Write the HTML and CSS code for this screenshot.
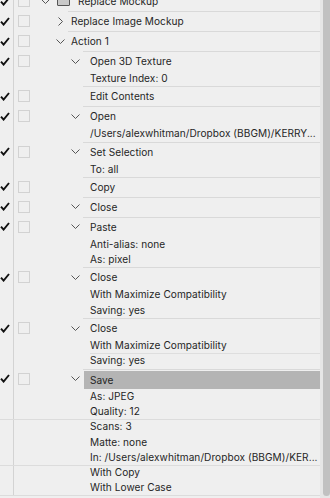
FILE: index.html
```html
<!doctype html>
<html lang="en">
<head>
<meta charset="utf-8">
<title>Actions</title>
<link rel="stylesheet" href="styles.css">
</head>
<body>

<div class="panel">
  <div class="list">

    <div class="row lv0">
      <div class="chk"><span><svg viewBox="0 0 10 9"><path d="M1 4.6l2.6 3L9 1"/></svg></span></div>
      <div class="box"><i></i></div>
      <div class="main">
        <span class="tw"><svg class="dn" viewBox="0 0 9 5"><path d="M.5.5l4 4 4-4"/></svg></span>
        <span class="set"></span>
        <div class="lines"><div class="ln">Replace Mockup</div></div>
      </div>
    </div>

    <div class="row lv1">
      <div class="chk"><span><svg viewBox="0 0 10 9"><path d="M1 4.6l2.6 3L9 1"/></svg></span></div>
      <div class="box"><i></i></div>
      <div class="main">
        <span class="tw"><svg class="rt" viewBox="0 0 5 9"><path d="M.5.5l4 4-4 4"/></svg></span>
        <div class="lines"><div class="ln">Replace Image Mockup</div></div>
      </div>
    </div>

    <div class="row lv1">
      <div class="chk"><span><svg viewBox="0 0 10 9"><path d="M1 4.6l2.6 3L9 1"/></svg></span></div>
      <div class="box"><i></i></div>
      <div class="main">
        <span class="tw"><svg class="dn" viewBox="0 0 9 5"><path d="M.5.5l4 4 4-4"/></svg></span>
        <div class="lines"><div class="ln">Action 1</div></div>
      </div>
    </div>

    <div class="row lv2">
      <div class="chk"><span><svg viewBox="0 0 10 9"><path d="M1 4.6l2.6 3L9 1"/></svg></span></div>
      <div class="box"><i></i></div>
      <div class="main">
        <span class="tw"><svg class="dn" viewBox="0 0 9 5"><path d="M.5.5l4 4 4-4"/></svg></span>
        <div class="lines">
          <div class="ln">Open 3D Texture</div>
          <div class="ln">Texture Index: 0</div>
        </div>
      </div>
    </div>

    <div class="row lv2">
      <div class="chk"><span><svg viewBox="0 0 10 9"><path d="M1 4.6l2.6 3L9 1"/></svg></span></div>
      <div class="box"><i></i></div>
      <div class="main">
        <span class="tw"></span>
        <div class="lines"><div class="ln">Edit Contents</div></div>
      </div>
    </div>

    <div class="row lv2">
      <div class="chk"><span><svg viewBox="0 0 10 9"><path d="M1 4.6l2.6 3L9 1"/></svg></span></div>
      <div class="box"><i></i></div>
      <div class="main">
        <span class="tw"><svg class="dn" viewBox="0 0 9 5"><path d="M.5.5l4 4 4-4"/></svg></span>
        <div class="lines">
          <div class="ln">Open</div>
          <div class="ln">/Users/alexwhitman/Dropbox (BBGM)/KERRY...</div>
        </div>
      </div>
    </div>

    <div class="row lv2">
      <div class="chk"><span><svg viewBox="0 0 10 9"><path d="M1 4.6l2.6 3L9 1"/></svg></span></div>
      <div class="box"><i></i></div>
      <div class="main">
        <span class="tw"><svg class="dn" viewBox="0 0 9 5"><path d="M.5.5l4 4 4-4"/></svg></span>
        <div class="lines">
          <div class="ln">Set Selection</div>
          <div class="ln">To: all</div>
        </div>
      </div>
    </div>

    <div class="row lv2">
      <div class="chk"><span><svg viewBox="0 0 10 9"><path d="M1 4.6l2.6 3L9 1"/></svg></span></div>
      <div class="box"><i></i></div>
      <div class="main">
        <span class="tw"></span>
        <div class="lines"><div class="ln">Copy</div></div>
      </div>
    </div>

    <div class="row lv2">
      <div class="chk"><span><svg viewBox="0 0 10 9"><path d="M1 4.6l2.6 3L9 1"/></svg></span></div>
      <div class="box"><i></i></div>
      <div class="main">
        <span class="tw"><svg class="dn" viewBox="0 0 9 5"><path d="M.5.5l4 4 4-4"/></svg></span>
        <div class="lines"><div class="ln">Close</div></div>
      </div>
    </div>

    <div class="row lv2">
      <div class="chk"><span><svg viewBox="0 0 10 9"><path d="M1 4.6l2.6 3L9 1"/></svg></span></div>
      <div class="box"><i></i></div>
      <div class="main">
        <span class="tw"><svg class="dn" viewBox="0 0 9 5"><path d="M.5.5l4 4 4-4"/></svg></span>
        <div class="lines">
          <div class="ln">Paste</div>
          <div class="ln">Anti-alias: none</div>
          <div class="ln">As: pixel</div>
        </div>
      </div>
    </div>

    <div class="row lv2">
      <div class="chk"><span><svg viewBox="0 0 10 9"><path d="M1 4.6l2.6 3L9 1"/></svg></span></div>
      <div class="box"><i></i></div>
      <div class="main">
        <span class="tw"><svg class="dn" viewBox="0 0 9 5"><path d="M.5.5l4 4 4-4"/></svg></span>
        <div class="lines">
          <div class="ln">Close</div>
          <div class="ln">With Maximize Compatibility</div>
          <div class="ln">Saving: yes</div>
        </div>
      </div>
    </div>

    <div class="row lv2">
      <div class="chk"><span><svg viewBox="0 0 10 9"><path d="M1 4.6l2.6 3L9 1"/></svg></span></div>
      <div class="box"><i></i></div>
      <div class="main">
        <span class="tw"><svg class="dn" viewBox="0 0 9 5"><path d="M.5.5l4 4 4-4"/></svg></span>
        <div class="lines">
          <div class="ln">Close</div>
          <div class="ln">With Maximize Compatibility</div>
          <div class="ln rule">Saving: yes</div>
        </div>
      </div>
    </div>

    <div class="row lv2 sel">
      <div class="chk"><span><svg viewBox="0 0 10 9"><path d="M1 4.6l2.6 3L9 1"/></svg></span></div>
      <div class="box"><i></i></div>
      <div class="main">
        <span class="tw"><svg class="dn" viewBox="0 0 9 5"><path d="M.5.5l4 4 4-4"/></svg></span>
        <div class="lines">
          <div class="ln">Save</div>
          <div class="ln">As: JPEG</div>
          <div class="ln">Quality: 12</div>
          <div class="ln xrule">Scans: 3</div>
          <div class="ln">Matte: none</div>
          <div class="ln">In: /Users/alexwhitman/Dropbox (BBGM)/KER...</div>
          <div class="ln xrule">With Copy</div>
          <div class="ln xrule-b">With Lower Case</div>
        </div>
      </div>
    </div>

  </div>
  <div class="scroll"><div class="thumb"></div></div>
</div>

</body>
</html>
```

FILE: styles.css
```css
:root{
  --bg:#efefef; --line:#d9d9d9; --ink:#262626; --sel:#b4b4b4;
}
*{box-sizing:border-box;margin:0;padding:0}
body{
  font-family:Inter,'Liberation Sans',sans-serif;font-size:10.1px;color:var(--ink);
  background:var(--bg);overflow:hidden
}
.panel{display:flex;height:498px;overflow:hidden}
.list{flex:1;margin-top:-9px;min-width:0}

/* --- one action row ------------------------------------------------- */
.row{display:flex}
.chk{width:14px;flex:none;border-right:1px solid #d3d3d3}
.chk span{height:20px;display:flex;align-items:center}
.chk svg{width:10px;height:9px}
.chk path{fill:none;stroke:#111;stroke-width:1.9;stroke-linejoin:miter}

.box{width:26px;height:20px;flex:none;display:flex;align-items:center;padding-left:4px}
.box i{width:12px;height:12px;border:1px solid #d2d2d2}

.main{flex:1;display:flex;align-items:flex-start;min-width:0}
.tw{width:16px;height:20px;flex:none;display:flex;align-items:center;justify-content:center}
.tw path{fill:none;stroke:#555;stroke-width:1}
.tw .dn{width:9px;height:5px}
.tw .rt{width:5px;height:9px}

.lines{flex:1;min-width:0;box-shadow:inset 0 1px 0 var(--line)}
.ln{height:15.3px;line-height:15.3px;white-space:nowrap;position:relative;letter-spacing:.05px}
.ln:first-child{height:20px;line-height:20px}

/* indent levels */
.lv0 .tw{width:10px}
.lv0 .lines{padding-left:8px}
.set{width:13px;height:20px;flex:none;margin-left:7px;position:relative}
.set::before{content:"";position:absolute;left:0;right:0;bottom:5px;height:14px;
  background:#c9c9c9;border:1px solid #555;border-radius:1px}

.lv1 .main{padding-left:12px}
.lv1 .lines{padding-left:3px}
.lv2 .main{padding-left:27px}
.lv2 .lines{padding-left:7px}

/* selected step */
.sel .ln:first-child{margin-top:2px;height:18px;line-height:18px;
  background:var(--sel);margin-left:-6px;padding-left:6px}

/* stray separators the panel draws */
.rule{box-shadow:inset 0 1px 0 #dedede}
.xrule::before,.xrule-b::after{content:"";position:absolute;left:-90px;right:0;height:1px;background:#dcdcdc}
.xrule::before{top:0}
.xrule-b::after{bottom:0}

/* scrollbar */
.scroll{width:10px;flex:none;background:#e6e6e6;padding-left:3px}
.thumb{height:506px;margin-top:-10px;background:#c1c1c1;border-radius:4px}
```
